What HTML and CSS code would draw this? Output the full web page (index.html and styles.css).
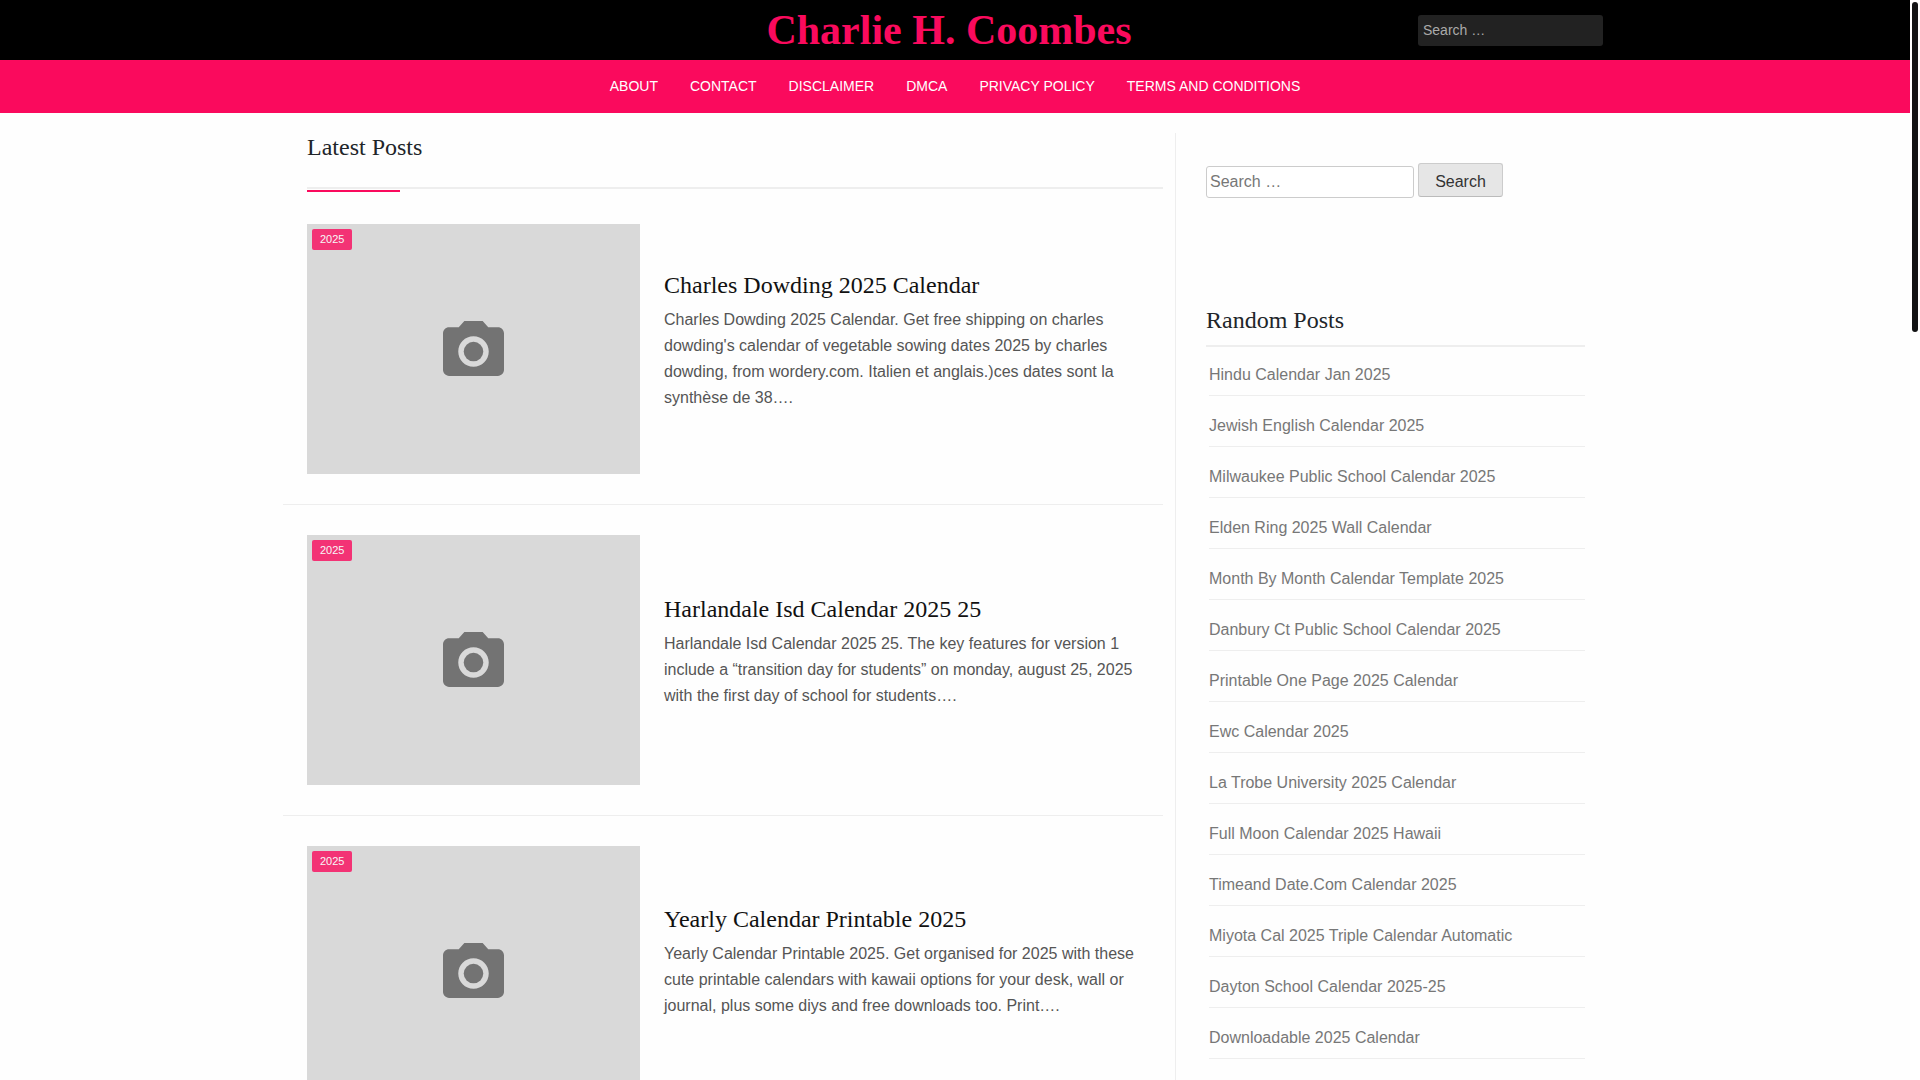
FILE: index.html
```html
<!DOCTYPE html>
<html lang="en">
<head>
<meta charset="utf-8">
<meta name="viewport" content="width=device-width, initial-scale=1">
<title>Charlie H. Coombes</title>
<link rel="stylesheet" href="styles.css">
</head>
<body>
<svg class="sprite" aria-hidden="true">
  <symbol id="camera" viewBox="2 2 20 18">
    <circle cx="12" cy="12" r="3.2"/>
    <path d="M9 2 7.17 4H4c-1.1 0-2 .9-2 2v12c0 1.1.9 2 2 2h16c1.1 0 2-.9 2-2V6c0-1.1-.9-2-2-2h-3.17L15 2H9zm3 15c-2.76 0-5-2.24-5-5s2.24-5 5-5 5 2.24 5 5-2.24 5-5 5z"/>
  </symbol>
</svg>
<div class="frame">
  <div class="page">
    <header class="site-header">
      <div class="header-inner">
        <h1 class="site-title"><a href="#">Charlie H. Coombes</a></h1>
        <form class="header-search" role="search">
          <input class="header-field" type="search" placeholder="Search …" aria-label="Search for">
        </form>
      </div>
    </header>
    <nav class="site-nav" aria-label="Primary">
      <a href="#">ABOUT</a>
      <a href="#">CONTACT</a>
      <a href="#">DISCLAIMER</a>
      <a href="#">DMCA</a>
      <a href="#">PRIVACY POLICY</a>
      <a href="#">TERMS AND CONDITIONS</a>
    </nav>
    <div class="content">
      <main class="posts">
        <div class="posts-head"><h2 class="heading">Latest Posts</h2></div>
        <article class="post">
          <div class="thumb">
            <a class="badge" href="#">2025</a>
            <svg class="camera" aria-hidden="true"><use href="#camera"/></svg>
          </div>
          <div class="post-body">
            <h3 class="post-title"><a href="#">Charles Dowding 2025 Calendar</a></h3>
            <p class="excerpt">Charles Dowding 2025 Calendar. Get free shipping on charles dowding's calendar of vegetable sowing dates 2025 by charles dowding, from wordery.com. Italien et anglais.)ces dates sont la synthèse de 38….</p>
          </div>
        </article>
        <article class="post">
          <div class="thumb">
            <a class="badge" href="#">2025</a>
            <svg class="camera" aria-hidden="true"><use href="#camera"/></svg>
          </div>
          <div class="post-body">
            <h3 class="post-title"><a href="#">Harlandale Isd Calendar 2025 25</a></h3>
            <p class="excerpt">Harlandale Isd Calendar 2025 25. The key features for version 1 include a “transition day for students” on monday, august 25, 2025 with the first day of school for students….</p>
          </div>
        </article>
        <article class="post">
          <div class="thumb">
            <a class="badge" href="#">2025</a>
            <svg class="camera" aria-hidden="true"><use href="#camera"/></svg>
          </div>
          <div class="post-body">
            <h3 class="post-title"><a href="#">Yearly Calendar Printable 2025</a></h3>
            <p class="excerpt">Yearly Calendar Printable 2025. Get organised for 2025 with these cute printable calendars with kawaii options for your desk, wall or journal, plus some diys and free downloads too. Print….</p>
          </div>
        </article>
      </main>
      <aside class="sidebar">
        <form class="search" role="search">
          <input class="search-field" type="search" placeholder="Search …" aria-label="Search for">
          <button class="search-button" type="submit">Search</button>
        </form>
        <section>
          <h2 class="heading random-head">Random Posts</h2>
          <ul class="random">
            <li><a href="#">Hindu Calendar Jan 2025</a></li>
            <li><a href="#">Jewish English Calendar 2025</a></li>
            <li><a href="#">Milwaukee Public School Calendar 2025</a></li>
            <li><a href="#">Elden Ring 2025 Wall Calendar</a></li>
            <li><a href="#">Month By Month Calendar Template 2025</a></li>
            <li><a href="#">Danbury Ct Public School Calendar 2025</a></li>
            <li><a href="#">Printable One Page 2025 Calendar</a></li>
            <li><a href="#">Ewc Calendar 2025</a></li>
            <li><a href="#">La Trobe University 2025 Calendar</a></li>
            <li><a href="#">Full Moon Calendar 2025 Hawaii</a></li>
            <li><a href="#">Timeand Date.Com Calendar 2025</a></li>
            <li><a href="#">Miyota Cal 2025 Triple Calendar Automatic</a></li>
            <li><a href="#">Dayton School Calendar 2025-25</a></li>
            <li><a href="#">Downloadable 2025 Calendar</a></li>
          </ul>
        </section>
      </aside>
    </div>
  </div>
  <div class="scroll-track"><div class="scroll-thumb"></div></div>
</div>
</body>
</html>
```
FILE: styles.css
```css
*, *::before, *::after { box-sizing: border-box; }

body {
  margin: 0;
  background: #fefefe;
  color: #212529;
  font: 16px/26px "Liberation Sans", Arial, sans-serif;
}

a { color: inherit; text-decoration: none; }
h1, h2, h3, p, ul { margin: 0; }

.sprite { display: none; }

.frame {
  display: grid;
  grid-template-columns: minmax(0, 1fr) 10px;
  height: 100vh;
}

.page { overflow-y: auto; scrollbar-width: none; }

.scroll-track { padding: 2px; background: #fff; }
.scroll-thumb { height: 330px; border-radius: 3px; background: #121314; }

/* Header */
.site-header { background: #000; }

.header-inner {
  display: grid;
  grid-template-columns: 1fr auto 1fr;
  align-items: center;
  max-width: 1320px;
  height: 60px;
  margin: 0 auto;
  padding-right: 12px;
}

.site-title {
  grid-column: 2;
  color: #fa0a5d;
  font: bold 42px/48px "Liberation Serif", "Times New Roman", serif;
}

.header-search { display: flex; justify-content: flex-end; }

.header-field {
  width: 185px;
  height: 31px;
  padding: 0 5px;
  border: 0;
  border-radius: 3px;
  background: #222;
  color: #ccc;
  font: 14px/20px "Liberation Sans", Arial, sans-serif;
}
.header-field::placeholder { color: #aaa; }

.site-nav {
  display: flex;
  flex-wrap: wrap;
  justify-content: center;
  gap: 0 32px;
  padding: 13px 0 14px;
  background: #fa0a5d;
  color: #fff;
  font-size: 14px;
}

/* Columns */
.content {
  display: grid;
  grid-template-columns: minmax(0, 1fr) 452px;
  max-width: 1344px;
  margin: 20px auto 0;
}

.heading {
  font: 24px/28px "Liberation Serif", "Times New Roman", serif;
}

/* Posts */
.posts { padding-right: 12px; }

.posts-head { margin-left: 24px; }

.posts-head .heading {
  padding-bottom: 26px;
  border-bottom: 2px solid #eee;
}

.posts-head::after {
  content: "";
  display: block;
  width: 93px;
  height: 2px;
  margin: 1px 0 2px;
  background: #fa0a5d;
}

.post {
  display: grid;
  grid-template-columns: 333px minmax(0, 1fr);
  gap: 24px;
  align-items: center;
  padding: 30px 24px;
  border-bottom: 1px solid #eee;
}

.thumb {
  position: relative;
  display: grid;
  place-items: center;
  aspect-ratio: 4 / 3;
  background: #d9d9d9;
}

.camera { width: 61px; height: 55px; fill: #737373; }

.badge {
  position: absolute;
  top: 5px;
  left: 5px;
  padding: 0 8px;
  border-radius: 2px;
  background: #fa0a5d;
  color: #fff;
  font-size: 11px;
  line-height: 21px;
  opacity: .8;
}

.post-title {
  margin-bottom: 8px;
  color: #111;
  font: 24px/28px "Liberation Serif", "Times New Roman", serif;
}

.excerpt { margin-bottom: 16px; color: #555; }

/* Sidebar */
.sidebar {
  padding: 30px 42px 0 30px;
  border-left: 1px solid #eee;
}

.search {
  display: flex;
  align-items: baseline;
  gap: 4px;
  margin-bottom: 108px;
}

.search-field {
  width: 208px;
  height: 32px;
  padding: 0 3px;
  border: 1px solid #ccc;
  border-radius: 3px;
  background: #fff;
  color: #666;
  font: inherit;
}
.search-field::placeholder { color: #777; }

.search-button {
  width: 85px;
  height: 34px;
  padding: 4px 0 0;
  border: 1px solid #ccc;
  border-bottom-color: #bbb;
  border-radius: 3px;
  background: #e6e6e6;
  color: #333;
  font: inherit;
}

.random-head { padding-bottom: 11px; border-bottom: 2px solid #eee; }

.random { padding-left: 3px; list-style: none; }

.random li {
  padding: 15px 0 7px;
  border-bottom: 1px solid #eee;
  color: #777;
}

.random li + li { margin-top: 2px; }
```
